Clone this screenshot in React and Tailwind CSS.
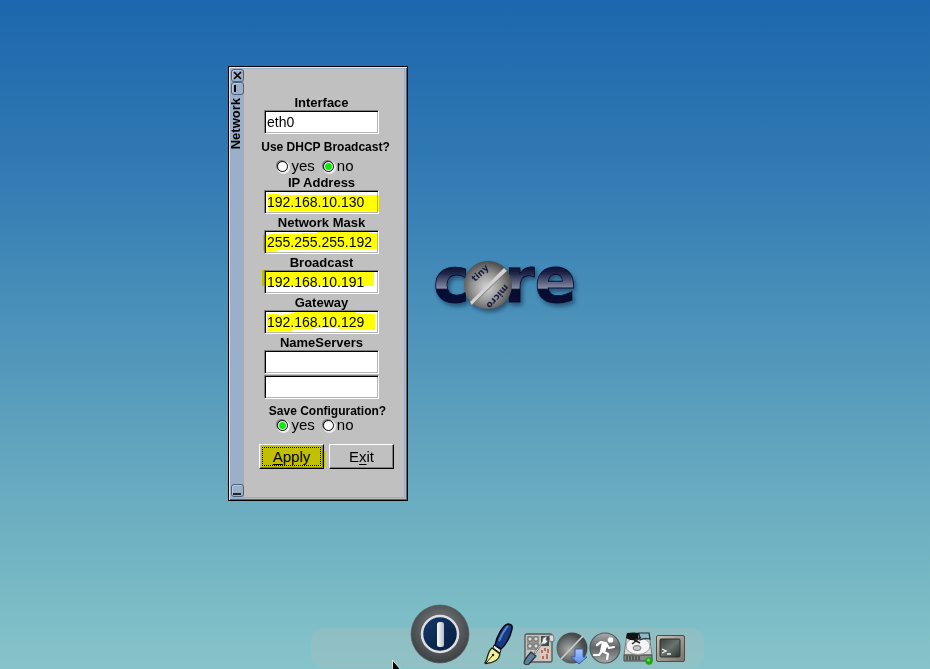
import React, { useState } from 'react';

const inputClass =
  'block h-6 w-[115px] border border-t-[#808080] border-l-[#808080] border-b-white border-r-white bg-white pl-[2px] text-[14px] leading-5 text-black outline-none shadow-[inset_1px_1px_0_#000,inset_-1px_-1px_0_#b4b4b4]';

function Marker({ points }) {
  return (
    <svg className="pointer-events-none absolute left-0 top-0 h-full w-full overflow-visible mix-blend-multiply" aria-hidden="true">
      <polygon points={points} fill="#ffff00" />
    </svg>
  );
}

function Field({ id, label, value, marker }) {
  return (
    <div className="flex flex-col items-center">
      <label htmlFor={id} className="h-4 whitespace-nowrap text-[13px] font-bold leading-[18px]">
        {label}
      </label>
      <div className="relative">
        <input id={id} type="text" defaultValue={value} className={inputClass} />
        {marker && <Marker points={marker} />}
      </div>
    </div>
  );
}

function Radio({ name, value, checked, onChange }) {
  return (
    <label className="flex items-center gap-[3px] text-[15px] leading-4">
      <input
        type="radio"
        name={name}
        value={value}
        checked={checked}
        onChange={() => onChange(value)}
        className="size-[11px] appearance-none rounded-full border border-black bg-white shadow-[-1px_-1px_0_#777,1px_1px_0_1px_#eee] checked:bg-[radial-gradient(circle,#00f000_3px,#fff_4px)]"
      />
      {value}
    </label>
  );
}

function Choice({ name, initial }) {
  const [value, setValue] = useState(initial);
  return (
    <div className="flex h-4 items-center gap-2 pr-3">
      <Radio name={name} value="yes" checked={value === 'yes'} onChange={setValue} />
      <Radio name={name} value="no" checked={value === 'no'} onChange={setValue} />
    </div>
  );
}

const titleButton =
  'flex h-[13px] w-[13px] items-center justify-center rounded-[3px] border border-[#4c617c] bg-[#9cafca] shadow-[inset_1px_1px_0_#b9c8dc]';
const pushButton =
  'block h-[25px] w-[65px] border border-t-white border-l-white border-b-black border-r-black bg-[#c0c0c0] text-[15px] leading-[22px] shadow-[inset_-1px_-1px_0_#808080]';

function NetworkWindow() {
  return (
    <section
      aria-label="Network"
      className="absolute left-[228px] top-[66px] flex w-[180px] border border-black bg-[#c0c0c0] shadow-[inset_1px_1px_0_#e4e8ef,inset_-1px_-1px_0_#606060,inset_-2px_-2px_0_#b8b8b8,inset_-3px_-3px_0_#9cafca,inset_2px_2px_0_#9cafca]"
    >
      <div className="my-px ml-px flex w-[14px] shrink-0 flex-col items-center bg-[#9cafca] pb-[2px] pt-px">
        <button aria-label="Close" className={titleButton}>
          <svg width="9" height="9" viewBox="0 0 9 9" aria-hidden="true">
            <path d="M1 1 8 8M8 1 1 8" stroke="#000" strokeWidth="1.6" />
          </svg>
        </button>
        <button aria-label="Maximize" className={titleButton}>
          <svg width="9" height="9" viewBox="0 0 9 9" aria-hidden="true">
            <path d="M2 1V8" stroke="#000" strokeWidth="2" />
          </svg>
        </button>
        <h1 className="mt-[3px] self-start rotate-180 text-[13px] font-bold leading-3 [writing-mode:vertical-rl]">Network</h1>
        <button aria-label="Minimize" className={`${titleButton} mt-auto`}>
          <svg width="9" height="9" viewBox="0 0 9 9" aria-hidden="true">
            <path d="M0 8H8" stroke="#000" strokeWidth="1.6" />
          </svg>
        </button>
      </div>
      <form className="flex min-w-0 flex-1 flex-col items-center pb-[31px] pr-2 pt-[27px]" onSubmit={(e) => e.preventDefault()}>
        <Field id="interface" label="Interface" value="eth0" />
        <div role="radiogroup" aria-labelledby="dhcp" className="flex flex-col items-center pt-[7px]">
          <p id="dhcp" className="whitespace-nowrap pl-2 text-[12px] font-bold leading-3">Use DHCP Broadcast?</p>
          <div className="pt-[5px]">
            <Choice name="dhcp" initial="no" />
          </div>
        </div>
        <Field id="ip" label="IP Address" value="192.168.10.130" marker="4,4 15,4 15,5 115,5 115,21 5,21 4,19" />
        <Field
          id="mask"
          label="Network Mask"
          value="255.255.255.192"
          marker="-1,5 5,5 5,4 38,4 38,3 53,3 53,2 105,2 105,3 113,3 113,19 55,19 55,20 13,20 13,21 -1,21"
        />
        <Field id="broadcast" label="Broadcast" value="192.168.10.191" marker="-2,0 4,0 4,1 110,1 110,16 -2,16" />
        <Field
          id="gateway"
          label="Gateway"
          value="192.168.10.129"
          marker="3,4 13,4 13,5 26,4 30,2 92,2 92,3 103,4 111,4 111,20 88,20 86,19 75,19 75,18 49,18 49,19 31,19 27,21 3,21"
        />
        <Field id="ns1" label="NameServers" value="" />
        <input type="text" aria-label="Second name server" className={`${inputClass} mt-px`} />
        <div role="radiogroup" aria-labelledby="save" className="flex flex-col items-center pt-[6px]">
          <p id="save" className="whitespace-nowrap pl-3 text-[12px] font-bold leading-3">Save Configuration?</p>
          <Choice name="save" initial="yes" />
        </div>
        <div className="flex gap-[5px] pl-[10px] pt-[11px]">
          <div className="relative">
            <button type="submit" className={`${pushButton} outline-1 -outline-offset-4 outline-dotted outline-black`}>
              <u className="underline-offset-2">A</u>pply
            </button>
            <Marker points="2,1 63,1 63,7 66,7 66,23 44,23 44,24 2,24" />
          </div>
          <button type="button" className={pushButton}>
            E<u className="underline-offset-2">x</u>it
          </button>
        </div>
      </form>
    </section>
  );
}

function CoreLogo() {
  return (
    <svg className="absolute left-[425px] top-[230px]" width="165" height="110" viewBox="0 -20 165 110" role="img" aria-label="Tiny Core">
      <defs>
        <linearGradient id="letter" x1="0" y1="16" x2="0" y2="54" gradientUnits="userSpaceOnUse">
          <stop offset="0" stopColor="#060b2c" />
          <stop offset="0.2" stopColor="#20264a" />
          <stop offset="0.58" stopColor="#858aa5" />
          <stop offset="0.62" stopColor="#060d2d" />
          <stop offset="1" stopColor="#071038" />
        </linearGradient>
        <radialGradient id="ball" cx="0.47" cy="0.55" r="0.55">
          <stop offset="0" stopColor="#d4d4d4" />
          <stop offset="0.55" stopColor="#949494" />
          <stop offset="1" stopColor="#4b4b4b" />
        </radialGradient>
        <filter id="soft" x="-10%" y="-10%" width="125%" height="135%">
          <feDropShadow dx="2" dy="3" stdDeviation="2" floodColor="#0b2d50" floodOpacity="0.65" />
        </filter>
      </defs>
      <g filter="url(#soft)">
        <g fill="url(#letter)" stroke="#060b2c" strokeWidth="0.8" fontFamily="DejaVu Sans" fontWeight="700" fontSize="62">
          <text x="8" y="52">c</text>
          <text x="79" y="52">re</text>
        </g>
        <circle cx="63" cy="35" r="24" fill="url(#ball)" />
        <path d="M45 52 79 18 82 21 47 55Z" fill="#d2d2d2" />
        <path d="M47 55 82 21" stroke="#777" strokeWidth="1" />
      </g>
      <g fill="#151d42" fontFamily="DejaVu Sans" fontWeight="700" fontSize="9">
        <text transform="translate(50 32) rotate(-43)">tiny</text>
        <text transform="translate(80 34) rotate(132)">micro</text>
      </g>
    </svg>
  );
}

function PowerIcon() {
  return (
    <svg width="60" height="60" viewBox="0 0 60 60" aria-hidden="true">
      <defs>
        <radialGradient id="pwr" cx="0.5" cy="0.4" r="0.6"><stop offset="0.4" stopColor="#666a6d" /><stop offset="0.8" stopColor="#4a4d50" /><stop offset="1" stopColor="#3c3f42" /></radialGradient>
        <linearGradient id="navy" x1="0" y1="0" x2="1" y2="1"><stop stopColor="#16396a" /><stop offset="1" stopColor="#051b3d" /></linearGradient>
        <linearGradient id="bar"><stop stopColor="#fff" /><stop offset="1" stopColor="#b5bbc2" /></linearGradient>
      </defs>
      <circle cx="30" cy="30" r="29" fill="url(#pwr)" stroke="#55595b" strokeWidth="0.6" />
      <circle cx="30" cy="30" r="18" fill="url(#navy)" stroke="#dcdee0" strokeWidth="2.5" />
      <rect x="27" y="18" width="7" height="25" rx="2.5" fill="url(#bar)" />
    </svg>
  );
}

function PenIcon() {
  return (
    <svg width="30" height="42" viewBox="0 0 30 42" aria-hidden="true">
      <path d="M11 22C13 13 19 2 24 1q5 0 4 5C26 15 21 23 17 26Z" fill="#173a82" stroke="#060b16" strokeWidth="1.5" />
      <path d="M15 18C18 11 21 6 24 3" stroke="#5d82c5" strokeWidth="2" fill="none" />
      <path d="m10 22 7 5-1 3-7-5Z" fill="#e9ecdf" stroke="#111" />
      <path d="M8 25 16 31C15 37 9 40 2 40.500L1 40C4 36 3 29 8 25Z" fill="#eef09a" stroke="#20200f" strokeWidth="1.3" />
      <path d="m2 40 7-8" stroke="#222" /><circle cx="9" cy="32" r="1.200" fill="#222" />
    </svg>
  );
}

function PanelIcon() {
  return (
    <svg width="32" height="34" viewBox="0 0 32 34" aria-hidden="true">
      <rect x="2" y="3" width="27" height="28" rx="1.5" fill="#c3c4bf" stroke="#555" strokeWidth="1.3" />
      <path d="M4 5h12v14H4z" fill="#92938e" />
      <path d="M18 5h8v10h-8z" fill="#454b4c" />
      <path d="M17 16h10v13H17z" fill="#d3cbc3" />
      {[6, 12].map((x) => [8, 15].map((y) => <circle key={`${x}-${y}`} cx={x + 1} cy={y} r="2.200" fill="#ddd" stroke="#666" />))}
      <path d="M19 19v3m3-5v3m3-2v4m-5 3v3m4-5v5" stroke="#b04332" strokeWidth="1.4" />
      <path d="M26 4h4q1 2 1 6l-4 1Z" fill="#ddd" stroke="#777" />
      <path d="m11 22 8-11 1-4 4-2-1 4 2 1-3 3-3 0-7 10Z" fill="#f0f2f2" stroke="#606b70" strokeWidth="0.8" />
      <path d="m8 21 5 4-7 8q-3 2-5-1 0-3 7-11Z" fill="#5d7d9b" stroke="#26333f" strokeWidth="1.2" />
    </svg>
  );
}

function AppsIcon() {
  return (
    <svg width="32" height="34" viewBox="0 0 32 34" aria-hidden="true">
      <defs>
        <radialGradient id="disc" cx="0.4" cy="0.55"><stop stopColor="#aaa" /><stop offset="0.6" stopColor="#707373" /><stop offset="1" stopColor="#464a4a" /></radialGradient>
        <linearGradient id="arrow" x1="0" y1="0" x2="0" y2="1"><stop stopColor="#a8c6ff" /><stop offset="1" stopColor="#5a8eec" /></linearGradient>
      </defs>
      <circle cx="16" cy="17" r="15.500" fill="url(#disc)" />
      <path d="m5 28 22-23" stroke="#c9cccb" strokeWidth="1.8" />
      <path d="M19 18h8v8h4l-8 7-8-7h4Z" fill="url(#arrow)" stroke="#3c5fae" />
    </svg>
  );
}

function RunIcon() {
  return (
    <svg width="32" height="34" viewBox="0 0 32 34" aria-hidden="true">
      <defs>
        <linearGradient id="run" x1="0" y1="0" x2="0" y2="1"><stop stopColor="#a7abac" /><stop offset="0.5" stopColor="#606363" /><stop offset="1" stopColor="#a8aaaa" /></linearGradient>
      </defs>
      <circle cx="16" cy="17" r="15" fill="url(#run)" stroke="#515858" strokeWidth="1.2" />
      <circle cx="21.500" cy="9" r="2.800" fill="#fff" />
      <path d="m8 14 4-3 5 1-4 8 6 3-1 5M13 20l-3 4H5M17 12l3 5 5-1" fill="none" stroke="#fff" strokeWidth="2.200" strokeLinecap="round" strokeLinejoin="round" />
      <path d="m13 11 6 2-3 8-5-1Z" fill="#fff" />
    </svg>
  );
}

function DiskIcon() {
  return (
    <svg width="32" height="34" viewBox="0 0 32 34" aria-hidden="true">
      <path d="M5 3h22l3 21H2Z" fill="#d7d9d8" stroke="#777" />
      <path d="M2 24h28v6H2Z" fill="#85898a" stroke="#444" />
      <path d="M5 25v4m3-4v4m3-4v4m3-4v4m3-4v4" stroke="#222" />
      <ellipse cx="16" cy="15" rx="12" ry="8.500" fill="#f4f4f4" stroke="#9b9e9e" />
      <ellipse cx="15" cy="17" rx="4" ry="2.500" fill="#c2c6c6" stroke="#777" />
      <path d="M5 2q7-1 12 0l-1 6q-6 3-12-1Z" fill="#101313" />
      <path d="M17 2h10l1 6q-6-1-10 1Z" fill="#8db9c6" stroke="#252d30" strokeWidth="1.2" />
      <path d="m19 6-5 4-4 3M12 9l6 3" fill="none" stroke="#222" strokeWidth="1.5" />
      <circle cx="27" cy="30" r="3.700" fill="#22a514" /><circle cx="26.500" cy="29" r="1.500" fill="#66e652" />
    </svg>
  );
}

function TerminalIcon() {
  return (
    <svg width="32" height="34" viewBox="0 0 32 34" aria-hidden="true">
      <defs>
        <linearGradient id="screen" x1="0" y1="0" x2="1" y2="1"><stop stopColor="#363f3c" /><stop offset="0.5" stopColor="#67736e" /><stop offset="1" stopColor="#29302e" /></linearGradient>
        <linearGradient id="bezel" x1="0" y1="0" x2="1" y2="1"><stop stopColor="#c9c5b9" /><stop offset="1" stopColor="#77736a" /></linearGradient>
      </defs>
      <rect x="1.500" y="4.500" width="28" height="26" rx="1.5" fill="url(#bezel)" stroke="#4f4c46" />
      <rect x="5" y="8" width="20" height="18" rx="1" fill="url(#screen)" stroke="#2c302e" />
      <path d="m7 18 4 2-4 2M12 23h4" fill="none" stroke="#f4f4f4" strokeWidth="1.300" />
    </svg>
  );
}

function Dock() {
  return (
    <nav aria-label="Dock" className="absolute bottom-[2px] left-[311px] flex h-[39px] w-[393px] items-end rounded-xl bg-[#a5bdc0]/40 pb-[2px] pl-[99px]">
      <button aria-label="Power" className="mb-px shrink-0"><PowerIcon /></button>
      <button aria-label="Editor" className="ml-[14px] mr-2 shrink-0"><PenIcon /></button>
      <div className="flex shrink-0 gap-[1px] pl-px">
        <button aria-label="Control panel"><PanelIcon /></button>
        <button aria-label="Apps"><AppsIcon /></button>
        <button aria-label="Run"><RunIcon /></button>
        <button aria-label="Mount tool"><DiskIcon /></button>
        <button aria-label="Terminal"><TerminalIcon /></button>
      </div>
    </nav>
  );
}

export default function App() {
  return (
    <main className="relative h-screen overflow-hidden bg-[linear-gradient(#1c67ad_0%,#3079b3_24%,#488fb9_45%,#67a9bf_72%,#85c5c9_100%)] font-['Liberation_Sans',Arial,sans-serif] text-black">
      <NetworkWindow />
      <CoreLogo />
      <Dock />
      <svg className="absolute bottom-0 left-[392px]" width="9" height="9" viewBox="0 0 9 9" aria-hidden="true">
        <path d="M.500 0V10H9Z" fill="#000" stroke="#fff" strokeWidth="0.800" />
      </svg>
    </main>
  );
}
